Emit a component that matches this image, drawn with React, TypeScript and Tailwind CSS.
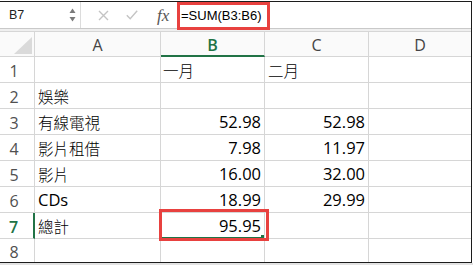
import React from "react";

type Row = {
  n: number;
  a?: string;
  b?: string;
  c?: string;
  bText?: boolean;
};

const rows: Row[] = [
  { n: 1, b: "一月", c: "二月", bText: true },
  { n: 2, a: "娛樂" },
  { n: 3, a: "有線電視", b: "52.98", c: "52.98" },
  { n: 4, a: "影片租借", b: "7.98", c: "11.97" },
  { n: 5, a: "影片", b: "16.00", c: "32.00" },
  { n: 6, a: "CDs", b: "18.99", c: "29.99" },
  { n: 7, a: "總計", b: "95.95" },
  { n: 8 },
];

const latin = "font-['Open_Sans','Noto_Sans_CJK_TC',sans-serif]";
const cjk = "font-['Noto_Sans_CJK_TC','Noto_Sans',sans-serif]";

function isCjk(s: string) {
  return /[\u3000-\u9fff]/.test(s);
}

function TextCell({ v }: { v?: string }) {
  if (!v) return null;
  if (isCjk(v)) {
    return (
      <span className={`${cjk} text-[15.5px] font-light text-black leading-none`}>{v}</span>
    );
  }
  return <span className={`${latin} text-[16.5px] text-black leading-none`}>{v}</span>;
}

export default function App() {
  return (
    <div className="relative w-[473px] h-[265px] bg-white overflow-hidden">
      <div className="mt-[1px] w-[472px] h-[262px] border-t border-r border-b border-[#1c1c1c] flex flex-col">
        {/* Formula bar */}
        <div className="h-[27px] shrink-0 flex border-b border-[#c9c9c9] bg-white">
          <div className="w-[81px] border-r border-[#dcdcdc] flex items-center pl-[9px] pr-[3px]">
            <span className="font-['Liberation_Sans',sans-serif] text-[12.5px] text-[#222] flex-1">B7</span>
            <svg width="7" height="14" viewBox="0 0 7 14" className="mr-[1px]">
              <path d="M3.5 0.5 L6.5 5 L0.5 5 Z" fill="#7a7a7a" />
              <path d="M3.5 13.5 L6.5 9 L0.5 9 Z" fill="#7a7a7a" />
            </svg>
          </div>
          <div className="w-[96px] flex items-center pl-[17px]">
            <svg width="11" height="11" viewBox="0 0 11 11">
              <path d="M1 1 L10 10 M10 1 L1 10" stroke="#c4c4c4" strokeWidth="1.4" fill="none" />
            </svg>
            <svg width="12" height="10" viewBox="0 0 12 10" className="ml-[17px]">
              <path d="M0.8 5.2 L4.2 8.8 L11.2 0.8" stroke="#c4c4c4" strokeWidth="1.4" fill="none" />
            </svg>
            <span className="ml-[19px] font-['Liberation_Serif',serif] italic text-[17px] text-[#555] leading-none">
              fx
            </span>
          </div>
          <div className="flex-1 flex items-center pl-[4px] pt-[1px]">
            <span className="font-['Liberation_Sans',sans-serif] text-[13px] text-black">=SUM(B3:B6)</span>
          </div>
        </div>
        <div className="h-[2px] shrink-0 bg-[#efefef]" />
        {/* Grid */}
        <div className="grid grid-cols-[35px_126px_104px_104px_102px]">
          {/* header row */}
          <div className="h-[26px] border-t border-b border-r border-[#d6d6d6] bg-[#fafafa] relative">
            <svg width="18" height="17" viewBox="0 0 18 17" className="absolute right-[2px] bottom-[2px]">
              <path d="M18 0 L18 17 L0 17 Z" fill="#dadada" />
            </svg>
          </div>
          <div className={`h-[26px] border-t border-b border-r border-[#d6d6d6] bg-[#fafafa] flex items-center justify-center pt-[1px] ${latin} text-[16px] text-[#444]`}>
            A
          </div>
          <div className={`h-[26px] border-t border-r border-[#d6d6d6] border-b-2 border-b-[#217346] bg-[#fafafa] flex items-center justify-center pt-[2px] ${latin} text-[16px] font-semibold text-[#217346]`}>
            B
          </div>
          <div className={`h-[26px] border-t border-b border-r border-[#d6d6d6] bg-[#fafafa] flex items-center justify-center pt-[1px] ${latin} text-[16px] text-[#444]`}>
            C
          </div>
          <div className={`h-[26px] border-t border-b border-[#d6d6d6] bg-[#fafafa] flex items-center justify-center pt-[1px] ${latin} text-[16px] text-[#444]`}>
            D
          </div>
          {rows.map((r) => {
            const last = r.n === 8;
            const h = last ? "h-[23px]" : "h-[26px] border-b";
            const sel = r.n === 7;
            return (
              <React.Fragment key={r.n}>
                <div
                  className={`${h} border-r border-[#d6d6d6] ${
                    sel ? "border-r-2 border-r-[#217346]" : ""
                  } flex items-center justify-center pr-[6px] pt-[2px] ${latin} text-[16px] ${
                    sel ? "text-[#217346] font-semibold" : "text-[#505050]"
                  }`}
                >
                  {r.n}
                </div>
                <div className={`${h} border-r border-[#d6d6d6] flex items-center pl-[3px] pt-[2px]`}>
                  <TextCell v={r.a} />
                </div>
                <div
                  className={`${h} border-r border-[#d6d6d6] flex items-center pt-[2px] relative ${
                    r.bText ? "pl-[2px]" : "justify-end pr-[3px]"
                  }`}
                >
                  <TextCell v={r.b} />
                  {sel && (
                    <>
                      <div className="absolute left-0 right-0 bottom-0 h-[1px] bg-[#217346]" />
                      <div className="absolute right-0 bottom-0 w-[3px] h-[3px] bg-[#217346]" />
                    </>
                  )}
                </div>
                <div
                  className={`${h} border-r border-[#d6d6d6] flex items-center pt-[2px] ${
                    r.n === 1 ? "pl-[3px]" : "justify-end pr-[3px]"
                  }`}
                >
                  <TextCell v={r.c} />
                </div>
                <div className={`${h} border-[#d6d6d6]`} />
              </React.Fragment>
            );
          })}
        </div>
      </div>
      <div className="h-[2px] bg-[#e2e2e2]" />
      {/* Annotation overlays */}
      <div className="absolute left-[177px] top-[2px] w-[93px] h-[28px] border-[3px] border-[#e8413f]" />
      <div className="absolute left-[159px] top-[209px] w-[110px] h-[32px] border-[3px] border-[#e8413f]" />
    </div>
  );
}
